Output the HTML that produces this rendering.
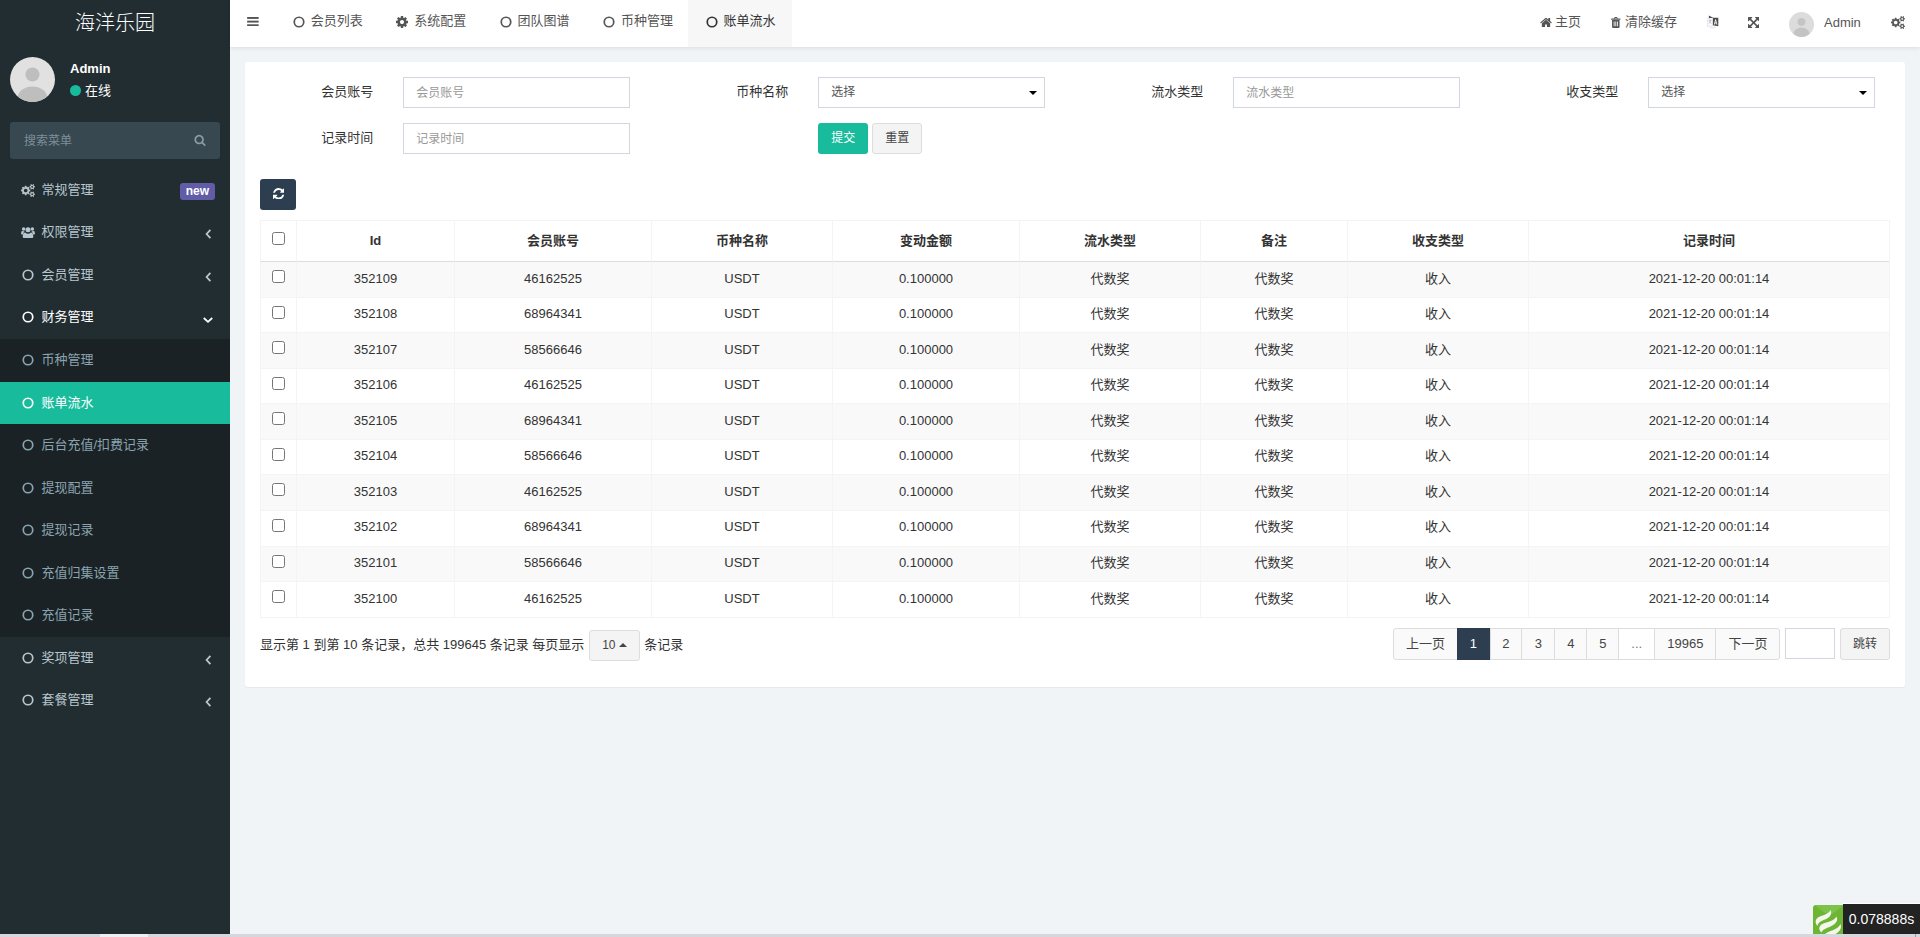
<!DOCTYPE html>
<html lang="zh-CN">
<head>
<meta charset="utf-8">
<title>海洋乐园</title>
<style>
*{box-sizing:border-box;}
html,body{margin:0;padding:0;}
body{width:1920px;height:937px;overflow:hidden;position:relative;background:#f1f4f6;
  font-family:"Liberation Sans","Noto Sans CJK SC",sans-serif;font-size:13px;line-height:1.42857;color:#333;}
svg{display:inline-block;vertical-align:middle;fill:currentColor;}
a{text-decoration:none;color:inherit;}
ul{list-style:none;margin:0;padding:0;}

/* ---------- sidebar ---------- */
#sidebar{position:absolute;left:0;top:0;width:230px;height:934px;background:#222d32;color:#b8c7ce;}
#logo{height:47px;line-height:46.5px;text-align:center;color:#fff;font-size:20px;font-weight:300;}
#userpanel{position:absolute;left:0;top:47px;width:230px;height:65px;}
#userpanel .avatar{position:absolute;left:10px;top:10px;width:45px;height:45px;border-radius:50%;background:#e1e1e1;overflow:hidden;}
#userpanel .name{position:absolute;left:70px;top:11.8px;font-weight:bold;color:#fff;font-size:13px;line-height:20px;}
#userpanel .status{position:absolute;left:70px;top:33.5px;color:#fff;font-size:13px;line-height:20px;}
#userpanel .dot{display:inline-block;width:11px;height:11px;border-radius:50%;background:#18bc9c;margin-right:4px;vertical-align:-1px;}
#search{position:absolute;left:10px;top:122px;width:210px;height:37px;background:#374850;border-radius:3px;color:#7d8f99;font-size:12px;line-height:39px;padding-left:14px;}
#search svg{position:absolute;right:14px;top:12px;width:12px;height:12px;color:#8d9ba3;}
#menu{position:absolute;left:0;top:168.7px;width:230px;}
#menu li{position:relative;height:42.57px;line-height:18.57px;padding:12px 5px 12px 15px;white-space:nowrap;}
#menu li .ic{display:inline-block;width:26.5px;height:14px;vertical-align:top;position:relative;top:3px;padding-left:7px;}
#menu li .ic svg{vertical-align:top;}
#menu li .arrow{position:absolute;right:17px;top:17px;width:8px;height:12px;}
#menu li.open{color:#fff;}
#menu li.sub{background:#1a2226;color:#8aa4af;}
#menu li.sub.active{background:#18bc9c;color:#fff;}
#menu .badge{position:absolute;right:15px;top:14.3px;background:#605ca8;color:#fff;font-size:12px;font-weight:bold;line-height:12px;padding:2px 6px 3px;border-radius:3px;}
.co{width:12px;height:12px;vertical-align:top;}

/* ---------- header ---------- */
#header{position:absolute;left:230px;top:0;width:1690px;height:47px;background:#fff;box-shadow:0 1px 4px rgba(0,21,41,.1);color:#555;}
#header .item{position:absolute;top:0;height:47px;line-height:42px;white-space:nowrap;}
#header .tab.active{background:#f7f7f7;color:#333;}
#header .tab .ti{position:absolute;left:17.5px;top:15.500px;width:12px;height:12px;line-height:0;}
#header .tab .tt{position:absolute;left:35.5px;top:0;}
#header .r{color:#555;line-height:44px;}
#header .hav{position:absolute;left:0;top:12px;width:25px;height:25px;border-radius:50%;background:#dcdcdc;overflow:hidden;line-height:0;}

/* ---------- content ---------- */
#panel{position:absolute;left:245px;top:62px;width:1660px;height:625px;background:#fff;border-radius:3px;box-shadow:0 1px 1px rgba(0,0,0,.05);}
.abs{position:absolute;}
.lbl{position:absolute;height:31px;line-height:29.5px;text-align:right;width:120px;font-size:13px;color:#333;}
.inp{position:absolute;width:227px;height:31px;border:1px solid #d2d6de;background:#fff;font-size:12px;line-height:30.5px;padding-left:12px;color:#999;}
.sel{color:#555;line-height:28.5px;}
.sel:after{content:"";position:absolute;right:7px;top:13px;border:4px solid transparent;border-top:4px solid #000;border-bottom:0;}
.btn{position:absolute;height:31px;line-height:29px;border:1px solid transparent;border-radius:3px;font-size:12px;text-align:center;}

#tb{position:absolute;width:1630px;table-layout:fixed;border-collapse:separate;border-spacing:0;border-right:1px solid #f4f4f4;border-bottom:1px solid #f4f4f4;}
#tb th,#tb td{border-left:1px solid #f4f4f4;border-top:1px solid #f4f4f4;text-align:center;padding:0;white-space:nowrap;overflow:hidden;}
#tb th{height:41px;line-height:24px;padding:7.5px 0 8.5px;font-weight:bold;color:#333;}
#tb td{height:35.57px;line-height:18.57px;padding:7.5px 0 8.5px;color:#333;vertical-align:top;}
#tb tbody tr:first-child td{border-top-color:#ddd;}
#tb tbody tr:nth-child(odd) td{background:#f9f9f9;}
.cb{display:inline-block;width:13px;height:13px;border:1px solid #767676;border-radius:2.5px;background:#fff;vertical-align:top;}
#tb th .cb{margin-top:3.7px;}
#tb td .cb{margin-top:0.5px;}
.pginfo{height:31px;line-height:31px;white-space:nowrap;color:#333;}
.psz{display:inline-block;vertical-align:top;width:50.4px;height:31px;margin:1px 1px 0 1.2px;border:1px solid #ddd;border-radius:3px;background:#f4f4f4;color:#444;font-size:12px;line-height:29px;text-align:center;}
.psz i{display:inline-block;margin-left:3px;vertical-align:2px;border:4px solid transparent;border-bottom:4px solid #444;border-top:0;}
#pager{position:absolute;height:31px;width:390px;font-size:13px;}
#pager span{position:absolute;top:0;height:32px;line-height:30px;border:1px solid #ddd;background:#fafafa;color:#444;text-align:center;}
#pager span:first-child{border-radius:3px 0 0 3px;}
#pager span:last-child{border-radius:0 3px 3px 0;}
#pager span.act{background:#2c3e50;border-color:#2c3e50;color:#fff;z-index:2;}
#pager span.dis{background:#fff;color:#777;}

#strip{position:absolute;left:0;top:934px;width:1920px;height:3px;background:#d6d6de;}
#strip i{position:absolute;left:100px;top:0;width:48px;height:3px;background:#ededf2;}
#strip b{position:absolute;left:1915px;top:0;width:1px;height:3px;background:#9a9aa2;}
#tp{position:absolute;left:1813px;top:905px;width:30px;height:29px;line-height:0;}
#tt{position:absolute;left:1843px;top:904px;width:77px;height:30px;background:#232323;color:#fff;font-size:14px;line-height:30px;padding-left:5.8px;white-space:nowrap;box-shadow:0 -1px 0 #fff;}
</style>
</head>
<body>

<div id="sidebar">
  <div id="logo">海洋乐园</div>

  <div id="userpanel">
    <div class="avatar"><svg viewBox="0 0 45 45" width="45" height="45"><circle cx="22.5" cy="17.5" r="7" fill="#bebebe"/><ellipse cx="22.5" cy="41" rx="14.8" ry="11.6" fill="#bebebe"/></svg></div>
    <div class="name">Admin</div>
    <div class="status"><span class="dot"></span>在线</div>
  </div>
  <div id="search">搜索菜单<svg viewBox="0 0 1792 1792"><path d="M1216 832q0-185-131.500-316.500t-316.500-131.500-316.500 131.500-131.500 316.500 131.500 316.500 316.500 131.500 316.500-131.500 131.500-316.500zm512 832q0 52-38 90t-90 38q-54 0-90-38l-343-342q-179 124-399 124-143 0-273.500-55.500t-225-150-150-225-55.500-273.500 55.500-273.500 150-225 225-150 273.500-55.500 273.500 55.500 225 150 150 225 55.500 273.500q0 220-124 399l343 343q37 37 37 90z"/></svg></div>
  <ul id="menu">
    <li><span class="ic" style="padding-left:6px"><svg viewBox="0 0 1920 1792" style="width:14px;height:13px"><path d="M896 896q0-106-75-181t-181-75-181 75-75 181 75 181 181 75 181-75 75-181zm768 512q0-52-38-90t-90-38-90 38-38 90q0 53 37.500 90.500t90.500 37.500 90.500-37.500 37.500-90.500zm0-1024q0-52-38-90t-90-38-90 38-38 90q0 53 37.500 90.500t90.500 37.500 90.500-37.500 37.500-90.500zm-384 421v185q0 10-7 19.500t-16 10.500l-155 24q-11 35-32 76 34 48 90 115 7 11 7 20 0 12-7 19-23 30-82.500 89.500t-78.500 59.500q-11 0-21-7l-115-90q-37 19-77 31-11 108-23 155-7 24-30 24h-186q-11 0-20-7.500t-10-17.500l-23-153q-34-10-75-31l-118 89q-7 7-20 7-11 0-21-8-144-133-144-160 0-9 7-19 10-14 41-53t47-61q-23-44-35-82l-152-24q-10-1-17-9.500t-7-19.500v-185q0-10 7-19.500t16-10.500l155-24q11-35 32-76-34-48-90-115-7-11-7-20 0-12 7-20 22-30 82-89t79-59q11 0 21 7l115 90q34-18 77-32 11-108 23-154 7-24 30-24h186q11 0 20 7.500t10 17.500l23 153q34 10 75 31l118-89q8-7 20-7 11 0 21 8 144 133 144 160 0 8-7 19-12 16-42 54t-45 60q23 48 34 82l152 23q10 2 17 10.500t7 19.500zm640 533v140q0 16-149 31-12 27-30 52 51 113 51 138 0 4-4 7-122 71-124 71-8 0-46-47t-52-68q-20 2-30 2t-30-2q-14 21-52 68t-46 47q-2 0-124-71-4-3-4-7 0-25 51-138-18-25-30-52-149-15-149-31v-140q0-16 149-31 13-29 30-52-51-113-51-138 0-4 4-7 4-2 35-20t59-34 30-16q8 0 46 46.500t52 67.500q20-2 30-2t30 2q51-71 92-112l6-2q4 0 124 70 4 3 4 7 0 25-51 138 17 23 30 52 149 15 149 31zm0-1024v140q0 16-149 31-12 27-30 52 51 113 51 138 0 4-4 7-122 71-124 71-8 0-46-47t-52-68q-20 2-30 2t-30-2q-14 21-52 68t-46 47q-2 0-124-71-4-3-4-7 0-25 51-138-18-25-30-52-149-15-149-31v-140q0-16 149-31 13-29 30-52-51-113-51-138 0-4 4-7 4-2 35-20t59-34 30-16q8 0 46 46.500t52 67.500q20-2 30-2t30 2q51-71 92-112l6-2q4 0 124 70 4 3 4 7 0 25-51 138 17 23 30 52 149 15 149 31z"/></svg></span>常规管理<span class="badge">new</span></li>
    <li><span class="ic" style="padding-left:6px"><svg viewBox="0 0 15 14" style="width:14px;height:13px"><circle cx="7.5" cy="4" r="2.7"/><circle cx="2.8" cy="3.2" r="1.9"/><circle cx="12.2" cy="3.2" r="1.9"/><path d="M3 13 q-1.2 0 -1.2 -1.3 q0 -4.6 2.6 -4.6 q1.4 1.3 3.1 1.3 t3.1 -1.3 q2.6 0 2.6 4.6 q0 1.3 -1.2 1.3z"/><path d="M0 8.2 q0 -3 1.7 -3 q1 0.9 2.2 0.8 q-1.6 1 -1.9 3.2 h-1 q-1 0 -1 -1z"/><path d="M15 8.2 q0 -3 -1.7 -3 q-1 0.9 -2.2 0.8 q1.6 1 1.9 3.2 h1 q1 0 1 -1z"/></svg></span>权限管理<svg class="arrow" viewBox="0 0 8 12"><path d="M5.4 1.8 L1.6 6 L5.4 10.2" fill="none" stroke="currentColor" stroke-width="1.8"/></svg></li>
    <li><span class="ic"><svg class="co" viewBox="0 0 12 12"><circle cx="6" cy="6" r="4.75" fill="none" stroke="currentColor" stroke-width="1.7"/></svg></span>会员管理<svg class="arrow" viewBox="0 0 8 12"><path d="M5.4 1.8 L1.6 6 L5.4 10.2" fill="none" stroke="currentColor" stroke-width="1.8"/></svg></li>
    <li class="open"><span class="ic"><svg class="co" viewBox="0 0 12 12"><circle cx="6" cy="6" r="4.75" fill="none" stroke="currentColor" stroke-width="1.7"/></svg></span>财务管理<svg class="arrow" viewBox="0 0 12 8" style="width:12px;height:8px;right:16px;top:19.5px"><path d="M1.8 2 L6 5.8 L10.2 2" fill="none" stroke="currentColor" stroke-width="1.8"/></svg></li>
    <li class="sub"><span class="ic"><svg class="co" viewBox="0 0 12 12"><circle cx="6" cy="6" r="4.75" fill="none" stroke="currentColor" stroke-width="1.7"/></svg></span>币种管理</li>
    <li class="sub active"><span class="ic"><svg class="co" viewBox="0 0 12 12"><circle cx="6" cy="6" r="4.75" fill="none" stroke="currentColor" stroke-width="1.7"/></svg></span>账单流水</li>
    <li class="sub"><span class="ic"><svg class="co" viewBox="0 0 12 12"><circle cx="6" cy="6" r="4.75" fill="none" stroke="currentColor" stroke-width="1.7"/></svg></span>后台充值/扣费记录</li>
    <li class="sub"><span class="ic"><svg class="co" viewBox="0 0 12 12"><circle cx="6" cy="6" r="4.75" fill="none" stroke="currentColor" stroke-width="1.7"/></svg></span>提现配置</li>
    <li class="sub"><span class="ic"><svg class="co" viewBox="0 0 12 12"><circle cx="6" cy="6" r="4.75" fill="none" stroke="currentColor" stroke-width="1.7"/></svg></span>提现记录</li>
    <li class="sub"><span class="ic"><svg class="co" viewBox="0 0 12 12"><circle cx="6" cy="6" r="4.75" fill="none" stroke="currentColor" stroke-width="1.7"/></svg></span>充值归集设置</li>
    <li class="sub"><span class="ic"><svg class="co" viewBox="0 0 12 12"><circle cx="6" cy="6" r="4.75" fill="none" stroke="currentColor" stroke-width="1.7"/></svg></span>充值记录</li>
    <li><span class="ic"><svg class="co" viewBox="0 0 12 12"><circle cx="6" cy="6" r="4.75" fill="none" stroke="currentColor" stroke-width="1.7"/></svg></span>奖项管理<svg class="arrow" viewBox="0 0 8 12"><path d="M5.4 1.8 L1.6 6 L5.4 10.2" fill="none" stroke="currentColor" stroke-width="1.8"/></svg></li>
    <li><span class="ic"><svg class="co" viewBox="0 0 12 12"><circle cx="6" cy="6" r="4.75" fill="none" stroke="currentColor" stroke-width="1.7"/></svg></span>套餐管理<svg class="arrow" viewBox="0 0 8 12"><path d="M5.4 1.8 L1.6 6 L5.4 10.2" fill="none" stroke="currentColor" stroke-width="1.8"/></svg></li>
  </ul>
</div>

<div id="header">
  <div class="item" style="left:17px;width:12px"><svg viewBox="0 0 12 10" style="width:11.8px;height:9.6px;position:absolute;left:0;top:16.8px"><rect x="0" y="0" width="12" height="2"/><rect x="0" y="3.800" width="12" height="2"/><rect x="0" y="7.600" width="12" height="2"/></svg></div>
  <div class="item tab" style="left:45.3px;width:103.4px"><span class="ti"><svg class="co" viewBox="0 0 12 12"><circle cx="6" cy="6" r="4.75" fill="none" stroke="currentColor" stroke-width="1.7"/></svg></span><span class="tt">会员列表</span></div>
  <div class="item tab" style="left:148.7px;width:103.4px"><span class="ti"><svg class="co" viewBox="128 128 1536 1536"><path d="M1152 896q0-106-75-181t-181-75-181 75-75 181 75 181 181 75 181-75 75-181zm512-109v222q0 12-8 23t-20 13l-185 28q-19 54-39 91 35 50 107 138 10 12 10 25t-9 23q-27 37-99 108t-94 71q-12 0-26-9l-138-108q-44 23-91 38-16 136-29 186-7 28-36 28h-222q-14 0-24.500-8.500t-11.500-21.500l-28-184q-49-16-90-37l-141 107q-10 9-25 9-14 0-25-11-126-114-165-168-7-10-7-23 0-12 8-23 15-21 51-66.500t54-70.500q-27-50-41-99l-183-27q-13-2-21-12.500t-8-23.500v-222q0-12 8-23t19-13l186-28q14-46 39-92-40-57-107-138-10-12-10-24 0-10 9-23 26-36 98.500-107.500t94.500-71.500q13 0 26 10l138 107q44-23 91-38 16-136 29-186 7-28 36-28h222q14 0 24.500 8.500t11.500 21.500l28 184q49 16 90 37l142-107q9-9 24-9 13 0 25 10 129 119 165 170 7 8 7 22 0 12-8 23-15 21-51 66.500t-54 70.500q26 50 41 98l183 28q13 2 21 12.500t8 23.500z"/></svg></span><span class="tt">系统配置</span></div>
  <div class="item tab" style="left:252.0px;width:103.4px"><span class="ti"><svg class="co" viewBox="0 0 12 12"><circle cx="6" cy="6" r="4.75" fill="none" stroke="currentColor" stroke-width="1.7"/></svg></span><span class="tt">团队图谱</span></div>
  <div class="item tab" style="left:355.4px;width:103.4px"><span class="ti"><svg class="co" viewBox="0 0 12 12"><circle cx="6" cy="6" r="4.75" fill="none" stroke="currentColor" stroke-width="1.7"/></svg></span><span class="tt">币种管理</span></div>
  <div class="item tab active" style="left:458.1px;width:104.3px"><span class="ti"><svg class="co" viewBox="0 0 12 12"><circle cx="6" cy="6" r="4.75" fill="none" stroke="currentColor" stroke-width="1.7"/></svg></span><span class="tt">账单流水</span></div>
  <div class="item r" style="left:1309px"><svg viewBox="64 128 1664 1408" style="width:12px;height:10.2px;position:absolute;left:0.5px;top:16.7px"><path d="M1472 992v480q0 26-19 45t-45 19h-384v-384h-256v384h-384q-26 0-45-19t-19-45v-480q0-1 .5-3t.5-3l575-474 575 474q1 2 1 6zm223-69l-62 74q-8 9-21 11h-3q-13 0-21-7l-692-577-692 577q-12 8-24 7-13-2-21-11l-62-74q-8-10-7-23.500t11-21.500l719-599q32-26 76-26t76 26l244 204v-195q0-14 9-23t23-9h192q14 0 23 9t9 23v408l219 182q10 8 11 21.500t-7 23.500z"/></svg><span style="padding-left:16px">主页</span></div>
  <div class="item r" style="left:1381px"><svg viewBox="0 0 10 12" style="width:9.6px;height:11px;position:absolute;left:0.2px;top:16.8px"><path d="M0 1.6h3l.6-1.2q.2-.4.7-.4h1.4q.5 0 .7.4l.6 1.2h3v1.3h-10z M3.9 1.6h2.2l-.3-.6h-1.6z" fill-rule="evenodd"/><path d="M.9 3.4h8.2v7.2q0 1.4-1.2 1.4h-5.800q-1.200 0-1.200-1.400z M2.700 4.800v5.400h.9v-5.400z M4.550 4.800v5.400h.9v-5.400z M6.400 4.800v5.400h.9v-5.400z" fill-rule="evenodd"/></svg><span style="padding-left:14px">清除缓存</span></div>
  <div class="item r" style="left:1477px;width:12px"><svg viewBox="0 0 12 14" style="width:12px;height:14px;position:absolute;left:0;top:15.3px"><path d="M.4 3.300 L5.900 2.500 V10.700 L.4 11.300z" fill="#fff" stroke="#c9c9dc" stroke-width=".5"/><path d="M1.500 5.200 H4.600 M3 4.400 V5.200 M4.200 5.200 Q3.600 7.400 1.600 8.600 M2 6 Q2.800 7.800 4.600 8.500" stroke="#9a9ab0" stroke-width=".55" fill="none"/><path d="M1.900 .5 L5.900 2.700 H11.300 V11.300 L5.900 10.200 V3 H1.900z" fill="#4a4a4a"/><path d="M7.300 9.600 L8.600 4.600 L9.900 9.600 M7.800 8 H9.400" stroke="#fff" stroke-width=".85" fill="none"/><path d="M3 12.500 Q6.200 13.600 8.800 11.600" stroke="#c4c4d0" stroke-width=".5" fill="none"/></svg></div>
  <div class="item r" style="left:1517.5px;width:12px"><svg viewBox="128 128 1536 1536" style="width:11.3px;height:11.3px;position:absolute;left:0.2px;top:16.8px"><path d="M1411 541l-355 355 355 355 144-144q29-31 70-14 39 17 39 59v448q0 26-19 45t-45 19h-448q-42 0-59-40-17-39 14-69l144-144-355-355-355 355 144 144q31 30 14 69-17 40-59 40h-448q-26 0-45-19t-19-45v-448q0-42 40-59 39-17 69 14l144 144 355-355-355-355-144 144q-19 19-45 19-12 0-24-5-40-17-40-59v-448q0-26 19-45t45-19h448q42 0 59 40 17 39-14 69l-144 144 355 355 355-355-144-144q-31-30-14-69 17-40 59-40h448q26 0 45 19t19 45v448q0 42-39 59-13 5-25 5-26 0-45-19z"/></svg></div>
  <div class="item r" style="left:1559px"><span class="hav"><svg viewBox="0 0 25 25" width="25" height="25"><circle cx="12.5" cy="9.800" r="3.9" fill="#c4c4c4"/><ellipse cx="12.5" cy="22.3" rx="8" ry="6.700" fill="#c4c4c4"/></svg></span><span style="padding-left:35px;position:relative;top:0.8px">Admin</span></div>
  <div class="item r" style="left:1661px;width:14px"><svg viewBox="0 0 1920 1792" style="width:14px;height:13px;position:absolute;left:0;top:15.5px"><path d="M896 896q0-106-75-181t-181-75-181 75-75 181 75 181 181 75 181-75 75-181zm768 512q0-52-38-90t-90-38-90 38-38 90q0 53 37.500 90.500t90.500 37.500 90.500-37.500 37.500-90.500zm0-1024q0-52-38-90t-90-38-90 38-38 90q0 53 37.500 90.500t90.500 37.500 90.500-37.500 37.500-90.500zm-384 421v185q0 10-7 19.500t-16 10.500l-155 24q-11 35-32 76 34 48 90 115 7 11 7 20 0 12-7 19-23 30-82.500 89.500t-78.500 59.500q-11 0-21-7l-115-90q-37 19-77 31-11 108-23 155-7 24-30 24h-186q-11 0-20-7.500t-10-17.500l-23-153q-34-10-75-31l-118 89q-7 7-20 7-11 0-21-8-144-133-144-160 0-9 7-19 10-14 41-53t47-61q-23-44-35-82l-152-24q-10-1-17-9.500t-7-19.500v-185q0-10 7-19.500t16-10.500l155-24q11-35 32-76-34-48-90-115-7-11-7-20 0-12 7-20 22-30 82-89t79-59q11 0 21 7l115 90q34-18 77-32 11-108 23-154 7-24 30-24h186q11 0 20 7.500t10 17.500l23 153q34 10 75 31l118-89q8-7 20-7 11 0 21 8 144 133 144 160 0 8-7 19-12 16-42 54t-45 60q23 48 34 82l152 23q10 2 17 10.500t7 19.500zm640 533v140q0 16-149 31-12 27-30 52 51 113 51 138 0 4-4 7-122 71-124 71-8 0-46-47t-52-68q-20 2-30 2t-30-2q-14 21-52 68t-46 47q-2 0-124-71-4-3-4-7 0-25 51-138-18-25-30-52-149-15-149-31v-140q0-16 149-31 13-29 30-52-51-113-51-138 0-4 4-7 4-2 35-20t59-34 30-16q8 0 46 46.500t52 67.500q20-2 30-2t30 2q51-71 92-112l6-2q4 0 124 70 4 3 4 7 0 25-51 138 17 23 30 52 149 15 149 31zm0-1024v140q0 16-149 31-12 27-30 52 51 113 51 138 0 4-4 7-122 71-124 71-8 0-46-47t-52-68q-20 2-30 2t-30-2q-14 21-52 68t-46 47q-2 0-124-71-4-3-4-7 0-25 51-138-18-25-30-52-149-15-149-31v-140q0-16 149-31 13-29 30-52-51-113-51-138 0-4 4-7 4-2 35-20t59-34 30-16q8 0 46 46.500t52 67.500q20-2 30-2t30 2q51-71 92-112l6-2q4 0 124 70 4 3 4 7 0 25-51 138 17 23 30 52 149 15 149 31z"/></svg></div>
</div>

<div id="panel">
<div class="lbl" style="left:8.33px;top:15px">会员账号</div><div class="inp" style="left:158.33px;top:15px">会员账号</div>
<div class="lbl" style="left:423.33px;top:15px">币种名称</div><div class="inp sel" style="left:573.33px;top:15px">选择</div>
<div class="lbl" style="left:838.33px;top:15px">流水类型</div><div class="inp" style="left:988.33px;top:15px">流水类型</div>
<div class="lbl" style="left:1253.33px;top:15px">收支类型</div><div class="inp sel" style="left:1403.33px;top:15px">选择</div>
<div class="lbl" style="left:8.33px;top:61px">记录时间</div><div class="inp" style="left:158.33px;top:61px">记录时间</div>
<div class="btn" style="left:573.33px;top:61px;width:50px;background:#18bc9c;color:#fff">提交</div><div class="btn" style="left:627.30px;top:61px;width:50px;background:#f4f4f4;border-color:#ddd;color:#444">重置</div>
<div class="btn" style="left:15px;top:117px;width:36px;background:#2c3e50"><svg viewBox="128 128 1536 1536" style="width:11.4px;height:11.4px;position:absolute;left:11.6px;top:8px;color:#fff"><path d="M1639 1056q0 5-1 7-64 268-268 434.500t-478 166.500q-146 0-282.500-55t-243.500-157l-129 129q-19 19-45 19t-45-19-19-45v-448q0-26 19-45t45-19h448q26 0 45 19t19 45-19 45l-137 137q71 66 161 102t187 36q134 0 250-65t186-179q11-17 53-117 8-23 30-23h192q13 0 22.500 9.500t9.500 22.500zm25-800v448q0 26-19 45t-45 19h-448q-26 0-45-19t-19-45 19-45l138-138q-148-137-349-137-134 0-250 65t-186 179q-11 17-53 117-8 23-30 23h-199q-13 0-22.500-9.500t-9.500-22.500v-7q65-268 270-434.500t480-166.500q146 0 284 55.500t245 156.500l130-129q19-19 45-19t45 19 19 45z"/></svg></div>
<table id="tb" style="left:15px;top:158px"><colgroup><col style="width:36px"><col style="width:158px"><col style="width:197px"><col style="width:181px"><col style="width:187px"><col style="width:181px"><col style="width:147px"><col style="width:181px"><col style="width:361px"></colgroup>
<thead><tr><th><span class="cb"></span></th><th>Id</th><th>会员账号</th><th>币种名称</th><th>变动金额</th><th>流水类型</th><th>备注</th><th>收支类型</th><th>记录时间</th></tr></thead>
<tbody>
<tr><td><span class="cb"></span></td><td>352109</td><td>46162525</td><td>USDT</td><td>0.100000</td><td>代数奖</td><td>代数奖</td><td>收入</td><td>2021-12-20 00:01:14</td></tr>
<tr><td><span class="cb"></span></td><td>352108</td><td>68964341</td><td>USDT</td><td>0.100000</td><td>代数奖</td><td>代数奖</td><td>收入</td><td>2021-12-20 00:01:14</td></tr>
<tr><td><span class="cb"></span></td><td>352107</td><td>58566646</td><td>USDT</td><td>0.100000</td><td>代数奖</td><td>代数奖</td><td>收入</td><td>2021-12-20 00:01:14</td></tr>
<tr><td><span class="cb"></span></td><td>352106</td><td>46162525</td><td>USDT</td><td>0.100000</td><td>代数奖</td><td>代数奖</td><td>收入</td><td>2021-12-20 00:01:14</td></tr>
<tr><td><span class="cb"></span></td><td>352105</td><td>68964341</td><td>USDT</td><td>0.100000</td><td>代数奖</td><td>代数奖</td><td>收入</td><td>2021-12-20 00:01:14</td></tr>
<tr><td><span class="cb"></span></td><td>352104</td><td>58566646</td><td>USDT</td><td>0.100000</td><td>代数奖</td><td>代数奖</td><td>收入</td><td>2021-12-20 00:01:14</td></tr>
<tr><td><span class="cb"></span></td><td>352103</td><td>46162525</td><td>USDT</td><td>0.100000</td><td>代数奖</td><td>代数奖</td><td>收入</td><td>2021-12-20 00:01:14</td></tr>
<tr><td><span class="cb"></span></td><td>352102</td><td>68964341</td><td>USDT</td><td>0.100000</td><td>代数奖</td><td>代数奖</td><td>收入</td><td>2021-12-20 00:01:14</td></tr>
<tr><td><span class="cb"></span></td><td>352101</td><td>58566646</td><td>USDT</td><td>0.100000</td><td>代数奖</td><td>代数奖</td><td>收入</td><td>2021-12-20 00:01:14</td></tr>
<tr><td><span class="cb"></span></td><td>352100</td><td>46162525</td><td>USDT</td><td>0.100000</td><td>代数奖</td><td>代数奖</td><td>收入</td><td>2021-12-20 00:01:14</td></tr>
</tbody></table>
<div class="abs pginfo" style="left:15px;top:567px">显示第 1 到第 10 条记录，总共 199645 条记录 每页显示 <span class="psz">10<i></i></span> 条记录</div>
<div id="pager" style="left:1148px;top:566px"><span class="" style="left:0.0px;width:64.9px">上一页</span><span class="act" style="left:63.9px;width:32.9px">1</span><span class="" style="left:96.6px;width:32.7px">2</span><span class="" style="left:128.3px;width:34.0px">3</span><span class="" style="left:161.3px;width:33.1px">4</span><span class="" style="left:193.4px;width:32.8px">5</span><span class="dis" style="left:225.2px;width:37.2px">...</span><span class="" style="left:261.4px;width:61.9px">19965</span><span class="" style="left:322.3px;width:65.2px">下一页</span></div>
<div class="inp" style="left:1540px;top:566px;width:50px"></div><div class="btn" style="left:1595px;top:566px;width:50px;height:32px;line-height:30px;background:#f4f4f4;border-color:#ddd;color:#444">跳转</div>
</div>


<div id="strip"><i></i><b></b></div>
<div id="tp"><svg viewBox="0 0 30 29" width="30" height="29"><path d="M0 3 Q0 0 3 0 H30 V29 H0z" fill="#6db533"/><path d="M1.500 0 H30 L30 1 L19 9 L12 8z" fill="#7dc24b"/><path d="M17.500 5 C19.500 9 17 12.500 12 14.500 C8 16 5 17.500 4.500 21 C1.500 17.500 2 13.500 7 11.500 C12 9.500 16 8.500 17.500 5z M23.500 11.500 C25.500 15.500 23 19 17.500 21.500 C13 23.500 9.500 24.500 8.500 27.500 C5 24.500 5.500 20.500 10.500 18.500 C16 16.500 21.500 15.500 23.500 11.500z M27.500 19 C29 23 27 26.500 22.500 29 L12 29 C15 26 25 25 27.500 19z" fill="#f3f7ee"/></svg></div>
<div id="tt">0.078888s</div>
</body>
</html>
